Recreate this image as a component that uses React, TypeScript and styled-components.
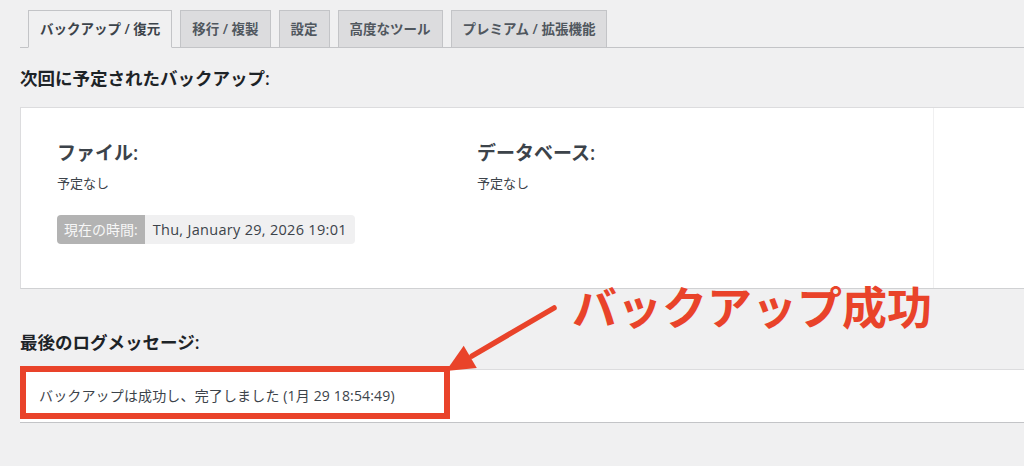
import styled, { createGlobalStyle } from "styled-components"

const GlobalStyle = createGlobalStyle`
  html, body {
    margin: 0;
    padding: 0;
    background: #f0f0f1;
    overflow: hidden;
  }
  body {
    font-family: "Open Sans", "Noto Sans CJK JP", sans-serif;
    color: #3c434a;
  }
`

const red = "#e9432a"

const Page = styled.div`
  position: relative;
  width: 1044px;
  height: 466px;
  padding-left: 20px;
  box-sizing: border-box;
`

const TabBar = styled.nav`
  display: flex;
  gap: 8px;
  padding: 10px 0 0 8px;
  border-bottom: 1px solid #c3c4c7;
`

const Tab = styled.div<{ $active?: boolean }>`
  height: 38px;
  box-sizing: border-box;
  margin-bottom: -1px;
  padding: 0 11px;
  border: 1px solid #c3c4c7;
  border-bottom-color: ${(p) => (p.$active ? "#f0f0f1" : "#c3c4c7")};
  background: ${(p) => (p.$active ? "#f0f0f1" : "#dcdcde")};
  color: ${(p) => (p.$active ? "#3c434a" : "#50575e")};
  font-size: 13.5px;
  font-weight: 600;
  line-height: 36px;
  white-space: nowrap;
`

const SectionTitle = styled.h2<{ $top: number; $bottom: number }>`
  margin: ${(p) => p.$top}px 0 ${(p) => p.$bottom}px;
  font-size: 17.5px;
  font-weight: 600;
  line-height: 24px;
  color: #1d2327;
`

const ScheduleBox = styled.div`
  display: flex;
  background: #fff;
  border: 1px solid #dcdcde;
  border-bottom-color: #d0d1d3;
`

const ScheduleMain = styled.div`
  width: 912px;
  box-sizing: border-box;
  display: grid;
  grid-template-columns: 420px 1fr;
  padding: 33px 0 44px 36px;
`

const ScheduleSide = styled.div`
  flex: 1;
  border-left: 1px solid #f0f0f1;
`

const Column = styled.div`
  display: flex;
  flex-direction: column;
  align-items: flex-start;
`

const FieldLabel = styled.div`
  font-size: 19px;
  font-weight: 600;
  line-height: 24px;
  color: #3c434a;
`

const FieldValue = styled.div`
  margin-top: 8px;
  font-size: 13px;
  line-height: 20px;
  color: #3c434a;
`

const Badge = styled.div`
  display: inline-flex;
  margin-top: 22px;
  height: 29px;
  border-radius: 4px;
  overflow: hidden;
  font-size: 14px;
  line-height: 29px;
`

const BadgeLabel = styled.span`
  padding: 0 7px;
  background: #b3b3b3;
  color: #f7f7f7;
`

const BadgeValue = styled.span`
  padding: 0 8px;
  background: #f0f0f1;
  color: #3c434a;
  font-size: 14.5px;
  letter-spacing: 0.3px;
`

const LogBox = styled.div`
  position: relative;
  background: #fff;
  border-top: 1px solid #dcdcde;
  border-bottom: 1px solid #c3c4c7;
  padding: 16px 19px;
  font-size: 14px;
  line-height: 20px;
  letter-spacing: 0.15px;
  color: #3c434a;
`

const Highlight = styled.div`
  position: absolute;
  left: 0;
  top: -4px;
  width: 430px;
  height: 53px;
  box-sizing: border-box;
  border: 6px solid ${red};
`

const Callout = styled.div`
  position: absolute;
  left: 572px;
  top: 283px;
  font-size: 45px;
  font-weight: 700;
  line-height: 45px;
  color: ${red};
  white-space: nowrap;
  font-family: "Noto Sans CJK JP", sans-serif;
`

const ArrowSvg = styled.svg`
  position: absolute;
  left: 430px;
  top: 290px;
`

const tabs = ["バックアップ / 復元", "移行 / 複製", "設定", "高度なツール", "プレミアム / 拡張機能"]

export default function App() {
  return (
    <>
      <GlobalStyle />
      <Page>
        <TabBar>
          {tabs.map((t, i) => (
            <Tab key={t} $active={i === 0}>
              {t}
            </Tab>
          ))}
        </TabBar>

        <SectionTitle $top={18} $bottom={17}>
          次回に予定されたバックアップ:
        </SectionTitle>
        <ScheduleBox>
          <ScheduleMain>
            <Column>
              <FieldLabel>ファイル:</FieldLabel>
              <FieldValue>予定なし</FieldValue>
              <Badge>
                <BadgeLabel>現在の時間:</BadgeLabel>
                <BadgeValue>Thu, January 29, 2026 19:01</BadgeValue>
              </Badge>
            </Column>
            <Column>
              <FieldLabel>データベース:</FieldLabel>
              <FieldValue>予定なし</FieldValue>
            </Column>
          </ScheduleMain>
          <ScheduleSide />
        </ScheduleBox>

        <SectionTitle $top={41} $bottom={15}>
          最後のログメッセージ:
        </SectionTitle>
        <LogBox>
          バックアップは成功し、完了しました (1月 29 18:54:49)
          <Highlight />
        </LogBox>

        <ArrowSvg width="140" height="100" viewBox="0 0 140 100">
          <line x1="124" y1="18" x2="42" y2="66" stroke={red} strokeWidth="5.5" strokeLinecap="round" />
          <polygon points="16,81 33.7,55.7 46.8,78.1" fill={red} />
        </ArrowSvg>
        <Callout>バックアップ成功</Callout>
      </Page>
    </>
  )
}
